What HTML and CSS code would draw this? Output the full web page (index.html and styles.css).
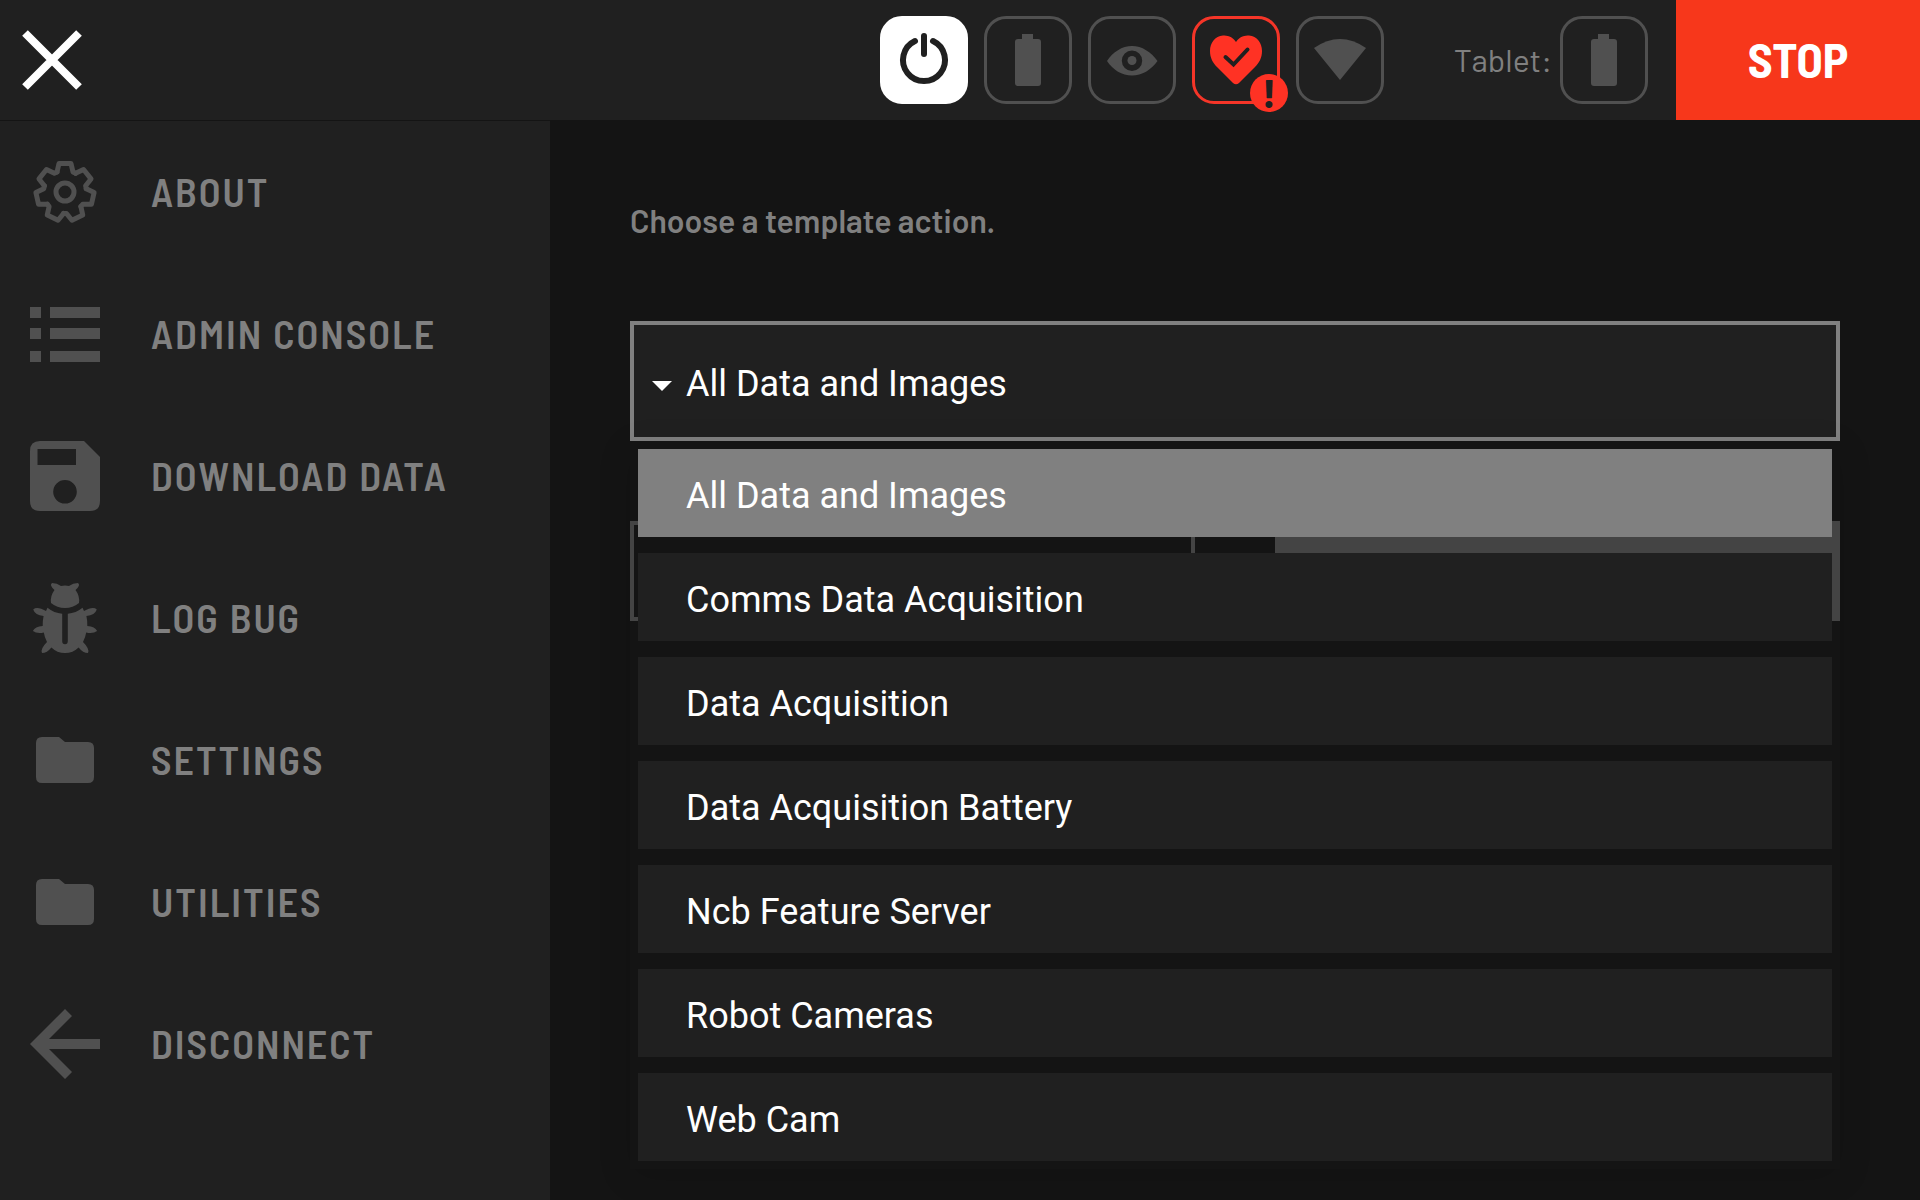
FILE: index.html
```html
<!DOCTYPE html>
<html lang="en">
<head>
<meta charset="utf-8">
<title>Admin Console</title>
<link rel="stylesheet" href="styles.css">
</head>
<body>
<svg class="defs" aria-hidden="true">
  <symbol id="battery" viewBox="0 0 88 88"><path d="M38 18h11v5h5q3 0 3 3v41q0 3-3 3H34q-3 0-3-3V26q0-3 3-3h4z"/></symbol>
  <symbol id="folder" viewBox="0 0 70 70"><path d="M12 12h17l6 5h23q6 0 6 6v29q0 6-6 6H12q-6 0-6-6V18q0-6 6-6z"/></symbol>
</svg>
<header class="topbar">
  <button class="close" type="button" aria-label="Close">
    <svg viewBox="0 0 60 60"><path d="M3 3l54 54M57 3L3 57"/></svg>
  </button>
  <div class="status">
    <button class="tile tile-on" type="button" aria-label="Power">
      <svg viewBox="0 0 88 88"><g class="line"><path d="M35 25a21 21 0 1 0 18 0"/><path d="M44 20v18"/></g></svg>
    </button>
    <button class="tile" type="button" aria-label="Robot battery"><svg viewBox="0 0 88 88"><use href="#battery"/></svg></button>
    <button class="tile" type="button" aria-label="Vision">
      <svg viewBox="0 0 88 88"><path fill-rule="evenodd" d="M19 45C25 36 34 30 44 30s19 6 25.500 15C63 54 54 59.500 44 59.500S25 54 19 45zM44 34.500a10.200 10.200 0 1 0 0 20.400a10.200 10.200 0 1 0 0-20.400z"/><circle cx="44" cy="44.500" r="4.500"/></svg>
    </button>
    <button class="tile tile-alert" type="button" aria-label="Health">
      <svg viewBox="0 0 88 88"><path d="M44 26C40 20 35 19.500 31 19.500C23 20 18 27 18 35c0 7 3 12 7 16l16 16q3 2.500 6 0l16-16c4-4 7-9 7-16c0-8-5-15-13-15.500C53 19.500 48 20 44 26z"/><path class="tick" d="M33.500 41l8 7.500l14-15"/></svg>
      <span class="badge">!</span>
    </button>
    <button class="tile" type="button" aria-label="Wifi"><svg viewBox="0 0 88 88"><path d="M18 32Q44 14 70 32L44 64z"/></svg></button>
  </div>
  <div class="tablet">
    <span class="tablet-label">Tablet:</span>
    <button class="tile" type="button" aria-label="Tablet battery"><svg viewBox="0 0 88 88"><use href="#battery"/></svg></button>
  </div>
  <button class="stop" type="button">STOP</button>
</header>
<div class="layout">
  <nav class="sidebar">
    <a class="nav-item" href="#about">
      <svg viewBox="0 0 70 70"><g class="gear" transform="translate(35 35)">
        <path id="tooth" d="M-8-20L-6-28.500H6L8-20L10.600-18.700"/>
        <use href="#tooth" transform="rotate(51.430)"/><use href="#tooth" transform="rotate(102.860)"/><use href="#tooth" transform="rotate(154.290)"/><use href="#tooth" transform="rotate(205.710)"/><use href="#tooth" transform="rotate(257.140)"/><use href="#tooth" transform="rotate(308.570)"/>
        <circle r="9"/></g></svg>
      <span>ABOUT</span></a>
    <a class="nav-item" href="#admin">
      <svg viewBox="0 0 70 70"><path d="M0 8h11v11H0zM20 8h50v11H20zM0 29h11v11H0zM20 29h50v11H20zM0 52h11v11H0zM20 52h50v11H20z"/></svg>
      <span>ADMIN CONSOLE</span></a>
    <a class="nav-item" href="#download">
      <svg viewBox="0 0 70 70"><path fill-rule="evenodd" d="M10 0h44l16 16v44q0 10-10 10H10Q0 70 0 60V10Q0 0 10 0zM7.500 8v16H46V8zM35 39a11.800 11.800 0 1 0 0 23.600a11.800 11.800 0 1 0 0-23.600z"/></svg>
      <span>DOWNLOAD DATA</span></a>
    <a class="nav-item" href="#bug">
      <svg viewBox="0 0 70 70">
        <path d="M35 2.500q2 0 4 .5Q43 0 48 0q3 2-2.500 7Q50 13 49 20Q43 25 35 25T21 20Q20 13 24.500 7Q19 2 22 0q5 0 9 3q2-.5 4-.5z"/>
        <g id="bug-half"><path d="M17.500 24.700Q24 30 32.200 30.700V58q0 3.300 2.800 3.300V70Q27 70 21.400 64.500Q17 70 12 70Q10 66 17 59Q14.500 54 13.800 49.500Q7 51 2.900 48Q5 43.500 12.700 43Q12.500 38 13.600 33Q5 32 3.200 26.500Q7 23 16 28z"/></g>
        <use href="#bug-half" transform="matrix(-1 0 0 1 70 0)"/></svg>
      <span>LOG BUG</span></a>
    <a class="nav-item" href="#settings"><svg viewBox="0 0 70 70"><use href="#folder"/></svg><span>SETTINGS</span></a>
    <a class="nav-item" href="#utilities"><svg viewBox="0 0 70 70"><use href="#folder"/></svg><span>UTILITIES</span></a>
    <a class="nav-item" href="#disconnect">
      <svg viewBox="0 0 70 70"><path d="M0 35L35 0l7 7l-23 23h51v10H19l23 23l-7 7z"/></svg>
      <span>DISCONNECT</span></a>
  </nav>
  <main class="content">
    <label class="prompt" for="template">Choose a template action.</label>
    <div class="picker">
      <select class="picker-select" id="template">
        <option>All Data and Images</option><option>Comms Data Acquisition</option><option>Data Acquisition</option><option>Data Acquisition Battery</option><option>Ncb Feature Server</option><option>Robot Cameras</option><option>Web Cam</option>
      </select>
      <svg class="caret" viewBox="0 0 20 10"><path d="M0 0h20L10 10z"/></svg>
      <div class="menu" role="listbox" aria-label="Template action">
        <button class="option option-selected" type="button" role="option" aria-selected="true">All Data and Images</button>
        <button class="option" type="button" role="option">Comms Data Acquisition</button>
        <button class="option" type="button" role="option">Data Acquisition</button>
        <button class="option" type="button" role="option">Data Acquisition Battery</button>
        <button class="option" type="button" role="option">Ncb Feature Server</button>
        <button class="option" type="button" role="option">Robot Cameras</button>
        <button class="option" type="button" role="option">Web Cam</button>
      </div>
    </div>
    <div class="actions">
      <button class="action" type="button" aria-label="Back"></button>
      <button class="action action-fill" type="button" aria-label="Next"></button>
    </div>
  </main>
</div>
</body>
</html>
```
FILE: styles.css
```css
* { box-sizing: border-box; }

body {
  margin: 0;
  min-height: 100vh;
  display: flex;
  flex-direction: column;
  background: #141414;
  color: #808080;
  font-family: Roboto, "Liberation Sans", sans-serif;
}

button, select {
  margin: 0;
  padding: 0;
  border: 0;
  border-radius: 0;
  font: inherit;
  color: inherit;
  background: none;
}

svg { display: block; fill: #505050; }
.defs { position: absolute; width: 0; height: 0; }

.topbar {
  display: flex;
  align-items: center;
  height: 120px;
  background: #202020;
}

.close { margin-left: 22px; margin-right: auto; }
.close svg { width: 60px; height: 60px; stroke: #fff; stroke-width: 8px; }

.status { display: flex; gap: 16px; }

.tile {
  position: relative;
  width: 88px;
  height: 88px;
  border: 3px solid #505050;
  border-radius: 22px;
}
.tile svg { width: 88px; height: 88px; margin: -3px; }
.tile-on { background: #fff; border-color: #fff; }
.line { fill: none; stroke: #202020; stroke-width: 6px; stroke-linecap: round; }
.tile-alert { border-color: #f53528; }
.tile-alert svg { fill: #ff3224; }
.tile-alert .tick { fill: none; stroke: #202020; stroke-width: 4px; stroke-linecap: round; }
.badge {
  position: absolute;
  right: -11px;
  bottom: -11px;
  width: 38px;
  height: 38px;
  border-radius: 50%;
  background: #ff3224;
  color: #202020;
  font-family: Barlow, Roboto, sans-serif;
  font-size: 40px;
  font-weight: 800;
  line-height: 36px;
  text-align: center;
}

.tablet {
  display: flex;
  align-items: center;
  justify-content: flex-end;
  gap: 8px;
  width: 264px;
  margin-right: 28px;
}
.tablet-label {
  padding-bottom: 2px;
  font-family: Barlow, Roboto, sans-serif;
  font-size: 32px;
}

.stop {
  align-self: stretch;
  width: 244px;
  padding-bottom: 2px;
  background: #f7371b;
  color: #fff;
  font-family: "Barlow Semi Condensed", Roboto, sans-serif;
  font-size: 48px;
  font-weight: 700;
}

.layout { flex: 1; display: flex; }

.sidebar {
  width: 550px;
  border-top: 1px solid #141414;
  background: #202020;
}
.nav-item {
  display: flex;
  align-items: center;
  gap: 51px;
  height: 142px;
  padding-left: 30px;
  color: #808080;
  font-family: "Barlow Semi Condensed", Roboto, sans-serif;
  font-size: 40px;
  font-weight: 600;
  letter-spacing: 2px;
  text-decoration: none;
}
.nav-item span { padding-bottom: 2px; }
.nav-item svg { width: 70px; height: 70px; }
.gear { fill: none; stroke: #505050; stroke-width: 5px; stroke-linecap: round; stroke-linejoin: round; }

.content { flex: 1; padding: 80px 80px 0; }
.prompt {
  display: block;
  margin-bottom: 81px;
  font-family: Barlow, Roboto, sans-serif;
  font-size: 32px;
  font-weight: 600;
  line-height: 40px;
}

.picker { position: relative; margin-bottom: 80px; }
.picker-select {
  display: block;
  width: 100%;
  height: 120px;
  padding-top: 6px;
  padding-left: 52px;
  border: 4px solid #808080;
  background: #202020;
  color: #fff;
  font-size: 36px;
  appearance: none;
}
.caret { position: absolute; left: 22px; top: 60px; width: 20px; height: 10px; fill: #fff; }

.menu {
  position: absolute;
  top: 100%;
  left: 0;
  right: 0;
  display: grid;
  gap: 16px;
  padding: 8px;
  box-shadow: 0 8px 32px rgba(0, 0, 0, 0.12);
}
.option {
  height: 88px;
  padding-top: 6px;
  padding-left: 48px;
  background: #202020;
  color: #fff;
  font-size: 36px;
  text-align: left;
}
.option-selected { background: #808080; }

.actions { display: grid; grid-template-columns: 1fr 1fr; gap: 80px; }
.action { height: 100px; border: 4px solid #444; }
.action-fill { background: #444; }
```
